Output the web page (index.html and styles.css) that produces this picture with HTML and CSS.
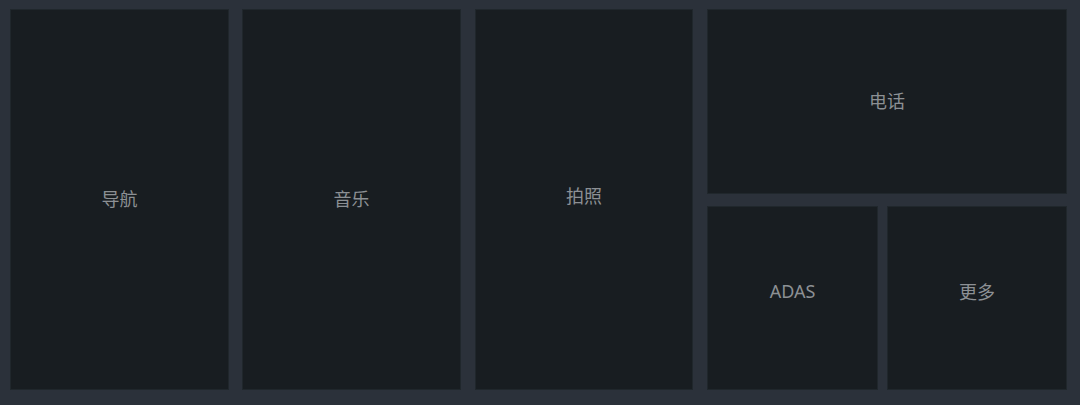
FILE: index.html
```html
<!DOCTYPE html>
<html lang="zh">
<head>
    <meta charset="UTF-8">
    <meta name="viewport" content="width=device-width, initial-scale=1.0">
    <title>Launcher</title>
    <link rel="stylesheet" href="styles.css">
</head>
<body>
    <div class="launcher">
        <div class="tile tall">导航</div>
        <div class="tile tall">音乐</div>
        <div class="tile tall photo">拍照</div>
        <div class="side">
            <div class="tile phone">电话</div>
            <div class="bottom-row">
                <div class="tile adas">ADAS</div>
                <div class="tile more">更多</div>
            </div>
        </div>
    </div>
</body>
</html>
```

FILE: styles.css
```css
html, body {
    margin: 0;
    padding: 0;
    background-color: #2b313a;
}
body {
    font-family: "Noto Sans", "Noto Sans CJK SC", sans-serif;
    width: 1080px;
    height: 405px;
    overflow: hidden;
}
.launcher {
    display: flex;
    gap: 13px;
    padding: 9px 12px 15px 10px;
    height: 381px;
}
.tile {
    background-color: #181d21;
    color: #8c9094;
    font-size: 18px;
    display: flex;
    align-items: center;
    justify-content: center;
    box-sizing: border-box;
    box-shadow: inset 0 0 0 1px #20272c;
}
.tall {
    width: 219px;
    padding-bottom: 3px;
}
.photo {
    width: 218px;
    margin-left: 1px;
    padding-bottom: 9px;
}
.side {
    margin-left: 1px;
    width: 360px;
    display: flex;
    flex-direction: column;
    gap: 12px;
}
.phone {
    height: 185px;
    padding-bottom: 3px;
}
.bottom-row {
    flex: 1;
    display: flex;
    gap: 9px;
}
.bottom-row .tile {
    padding-bottom: 14px;
}
.adas {
    width: 171px;
}
.more {
    flex: 1;
}
```
